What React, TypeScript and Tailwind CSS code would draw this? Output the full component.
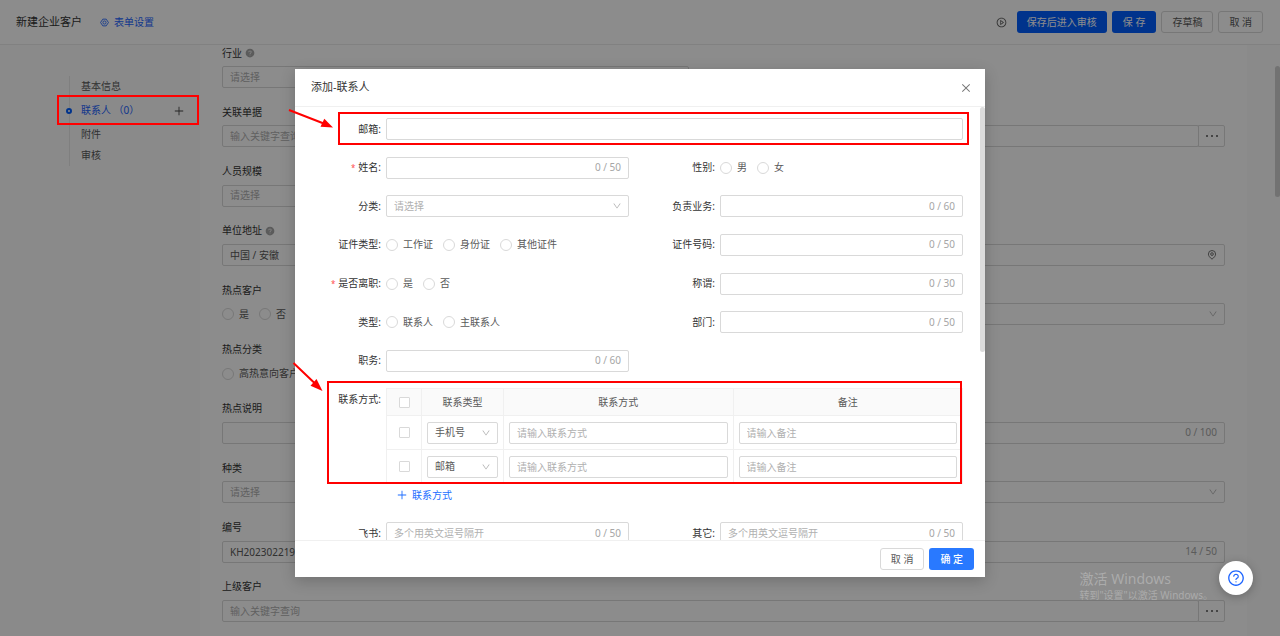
import { useState } from "react";
import type { ReactNode } from "react";
import {
  AiOutlineClose,
  AiOutlineDown,
  AiOutlinePlus,
  AiOutlinePlayCircle,
  AiOutlineQuestionCircle,
  AiFillQuestionCircle,
} from "react-icons/ai";

const navItems = [
  { label: "基本信息" },
  { label: "联系人 （0）", active: true },
  { label: "附件" },
  { label: "审核" },
];

const boxClass =
  "flex h-[22px] w-full min-w-0 items-center rounded-[2px] border border-[#d9d9d9] bg-white text-[10px] text-[#595959]";

function TextBox({ id, placeholder, value, count, label, suffix }: {
  id?: string;
  placeholder?: string;
  value?: string;
  count?: string;
  label?: string;
  suffix?: ReactNode;
}) {
  return (
    <div className={boxClass}>
      <input
        id={id}
        type="text"
        aria-label={label}
        placeholder={placeholder}
        defaultValue={value}
        className="h-full min-w-0 flex-1 bg-transparent px-[7px] outline-none placeholder:text-[#b0b0b0]"
      />
      {count && <span className="pr-[7px] text-[#a6a6a6]">{count}</span>}
      {suffix}
    </div>
  );
}

function SelectBox({ id, options, label, muted }: {
  id?: string;
  options: string[];
  label?: string;
  muted?: boolean;
}) {
  return (
    <div className={`${boxClass} relative`}>
      <select
        id={id}
        aria-label={label}
        className={`h-full w-full appearance-none bg-transparent px-[7px] outline-none ${muted ? "text-[#b0b0b0]" : ""}`}
      >
        {options.map((o) => (
          <option key={o}>{o}</option>
        ))}
      </select>
      <AiOutlineDown size={10} className="pointer-events-none absolute right-[6px] text-[#b0b0b0]" />
    </div>
  );
}

function Radios({ name, options }: { name: string; options: string[] }) {
  return (
    <div className="flex h-[22px] items-center gap-[10px] whitespace-nowrap text-[10px] text-[#595959]">
      {options.map((o) => (
        <label key={o} className="flex items-center gap-[5px]">
          <input
            type="radio"
            name={name}
            className="size-3 appearance-none rounded-full border border-[#d9d9d9] bg-white checked:border-4 checked:border-[#1677ff]"
          />
          {o}
        </label>
      ))}
    </div>
  );
}

// --- PAGE FORM ---
function PageField({ id, label, help, children }: {
  id?: string;
  label: string;
  help?: boolean;
  children: ReactNode;
}) {
  return (
    <div>
      <div className="mb-[5px] flex h-4 items-center gap-[3px] text-[10px] text-[#333]">
        <label htmlFor={id}>{label}</label>
        {help && <AiFillQuestionCircle size={10} className="text-[#a6a6a6]" />}
      </div>
      {children}
    </div>
  );
}

function LookupBox({ id }: { id: string }) {
  return (
    <div className="flex">
      <TextBox id={id} placeholder="输入关键字查询" />
      <button
        aria-label="选择"
        className="-ml-px flex h-[22px] w-[27px] shrink-0 items-center justify-center gap-[3px] rounded-r-[2px] border border-[#d9d9d9] bg-white"
      >
        <i className="size-[2px] rounded-full bg-[#555]" />
        <i className="size-[2px] rounded-full bg-[#555]" />
        <i className="size-[2px] rounded-full bg-[#555]" />
      </button>
    </div>
  );
}

function PinIcon() {
  return (
    <svg viewBox="0 0 12 12" className="mr-[7px] size-[10px] shrink-0" fill="none" stroke="#666" strokeWidth="1.1">
      <path d="M6 11C3.3 8.9 1.700 7.100 1.700 4.900a4.300 4.300 0 0 1 8.600 0C10.300 7.100 8.700 8.900 6 11Z" />
      <circle cx="6" cy="4.900" r="1.600" />
    </svg>
  );
}

function PageForm() {
  return (
    <div className="flex flex-1 flex-col justify-between bg-white px-[22px] pb-[14px]">
      <PageField id="industry" label="行业" help>
        <div className="w-[467px]">
          <SelectBox id="industry" options={["请选择"]} muted />
        </div>
      </PageField>
      <PageField id="related" label="关联单据">
        <LookupBox id="related" />
      </PageField>
      <PageField id="scale" label="人员规模">
        <div className="w-[467px]">
          <SelectBox id="scale" options={["请选择"]} muted />
        </div>
      </PageField>
      <PageField id="address" label="单位地址" help>
        <TextBox id="address" value="中国 / 安徽" suffix={<PinIcon />} />
      </PageField>
      <PageField label="热点客户">
        <div className="flex items-center">
          <div className="flex-1">
            <Radios name="hot" options={["是", "否"]} />
          </div>
          <div className="w-[467px]">
            <SelectBox label="热点客户选项" options={[""]} />
          </div>
        </div>
      </PageField>
      <PageField label="热点分类">
        <Radios name="hot-type" options={["高热意向客户"]} />
      </PageField>
      <PageField id="hot-note" label="热点说明">
        <TextBox id="hot-note" count="0 / 100" />
      </PageField>
      <PageField id="kind" label="种类">
        <SelectBox id="kind" options={["请选择"]} muted />
      </PageField>
      <PageField id="code" label="编号">
        <TextBox id="code" value="KH202302219001" count="14 / 50" />
      </PageField>
      <PageField id="parent" label="上级客户">
        <LookupBox id="parent" />
      </PageField>
    </div>
  );
}

function SettingIcon() {
  return (
    <svg viewBox="0 0 16 16" className="size-[9px]" fill="none" stroke="currentColor" strokeWidth="1.500">
      <path d="M5 2h6l4 6-4 6H5L1 8Z" strokeLinejoin="round" />
      <circle cx="8" cy="8" r="2.800" />
    </svg>
  );
}

function PageHeader() {
  return (
    <header className="flex h-[45px] shrink-0 items-center border-b border-[#ececec] bg-white pr-[17px] pl-4">
      <h1 className="text-[11px] text-[#333]">新建企业客户</h1>
      <a href="#settings" className="ml-[18px] flex items-center gap-[5px] text-[10px] text-[#1c64ff]">
        <SettingIcon />
        表单设置
      </a>
      <div className="ml-auto flex items-center gap-[5px] text-[10px]">
        <AiOutlinePlayCircle size={11} className="mr-[5px] text-[#555]" />
        <button className="h-[22px] rounded-[3px] bg-[#005eff] px-[10px] text-white">保存后进入审核</button>
        <button className="h-[22px] rounded-[3px] bg-[#005eff] px-[11px] text-white">保 存</button>
        <button className="h-[22px] rounded-[3px] border border-[#d9d9d9] px-[10px] text-[#595959]">存草稿</button>
        <button className="h-[22px] rounded-[3px] border border-[#d9d9d9] px-[10px] text-[#595959]">取 消</button>
      </div>
    </header>
  );
}

function SideNav() {
  return (
    <nav className="w-[200px] shrink-0 pt-[31px] pl-[69px]">
      <ul className="border-l border-[#e8e8e8] text-[10px] text-[#595959]">
        {navItems.map((item) => (
          <li
            key={item.label}
            className={`relative flex items-center pl-[11px] ${item.active ? "h-[27px] text-[#1c64ff]" : "h-[21px]"}`}
          >
            {item.active && (
              <i className="absolute -left-[4px] size-[6px] rounded-full border-2 border-[#005eff] bg-white" />
            )}
            <a href="#section">{item.label}</a>
            {item.active && (
              <button aria-label="添加" className="mr-[15px] ml-auto text-[#444]">
                <AiOutlinePlus size={12} />
              </button>
            )}
          </li>
        ))}
      </ul>
    </nav>
  );
}

// --- CONTACT DIALOG ---
function Row({ id, label, required, wide, children }: {
  id?: string;
  label: string;
  required?: boolean;
  wide?: boolean;
  children: ReactNode;
}) {
  return (
    <div className={`flex ${wide ? "w-full" : "w-1/2"}`}>
      <div className="flex h-[22px] w-[91px] shrink-0 items-center justify-end gap-[3px] pr-[5px] text-[10px] text-[#333]">
        {required && <span className="text-[8px] text-[#ff4d4f]">*</span>}
        <label htmlFor={id}>{label}:</label>
      </div>
      <div className="min-w-0 flex-1">{children}</div>
    </div>
  );
}

function ContactTable({ rows }: { rows: string[] }) {
  const check = "mx-auto block size-[11px] appearance-none rounded-[1px] border border-[#d9d9d9] bg-white";
  return (
    <table className="w-full table-fixed border-collapse text-[10px] text-[#595959]">
      <thead>
        <tr className="h-[27px] bg-[#fafafa]">
          <th className="w-[35px] border border-[#f0f0f0]">
            <input type="checkbox" aria-label="全选" className={check} />
          </th>
          <th className="w-[82px] border border-[#f0f0f0] font-normal">联系类型</th>
          <th className="border border-[#f0f0f0] font-normal">联系方式</th>
          <th className="border border-[#f0f0f0] font-normal">备注</th>
        </tr>
      </thead>
      <tbody>
        {rows.map((row, i) => (
          <tr key={i} className="h-[34px]">
            <td className="border border-[#f0f0f0]">
              <input type="checkbox" aria-label={row} className={check} />
            </td>
            <td className="border border-[#f0f0f0] px-[5px]">
              <SelectBox label="联系类型" options={[row]} />
            </td>
            <td className="border border-[#f0f0f0] px-[5px]">
              <TextBox label="联系方式" placeholder="请输入联系方式" />
            </td>
            <td className="border border-[#f0f0f0] px-[5px]">
              <TextBox label="备注" placeholder="请输入备注" />
            </td>
          </tr>
        ))}
      </tbody>
    </table>
  );
}

function ContactDialog() {
  const [rows, setRows] = useState(["手机号", "邮箱"]);

  return (
    <div
      role="dialog"
      aria-label="添加-联系人"
      className="relative flex h-[508px] w-[690px] flex-col bg-white shadow-[0_4px_14px_rgba(0,0,0,0.2)]"
    >
      <div className="flex h-[38px] shrink-0 items-center justify-between border-b border-[#f0f0f0] px-4">
        <h2 className="text-[11px] text-[#333]">添加-联系人</h2>
        <button aria-label="关闭" className="-mr-[3px] text-[#777]">
          <AiOutlineClose size={12} />
        </button>
      </div>

      <div className="relative min-h-0 flex-1 overflow-hidden pt-[11px] pr-[22px]">
        <div className="flex h-[254px] flex-col justify-between">
          <Row id="email" label="邮箱" wide>
            <TextBox id="email" />
          </Row>
          <div className="flex">
            <Row id="name" label="姓名" required>
              <TextBox id="name" count="0 / 50" />
            </Row>
            <Row label="性别">
              <Radios name="gender" options={["男", "女"]} />
            </Row>
          </div>
          <div className="flex">
            <Row id="category" label="分类">
              <SelectBox id="category" options={["请选择"]} muted />
            </Row>
            <Row id="business" label="负责业务">
              <TextBox id="business" count="0 / 60" />
            </Row>
          </div>
          <div className="flex">
            <Row label="证件类型">
              <Radios name="cert" options={["工作证", "身份证", "其他证件"]} />
            </Row>
            <Row id="cert-no" label="证件号码">
              <TextBox id="cert-no" count="0 / 50" />
            </Row>
          </div>
          <div className="flex">
            <Row label="是否离职" required>
              <Radios name="left" options={["是", "否"]} />
            </Row>
            <Row id="salutation" label="称谓">
              <TextBox id="salutation" count="0 / 30" />
            </Row>
          </div>
          <div className="flex">
            <Row label="类型">
              <Radios name="type" options={["联系人", "主联系人"]} />
            </Row>
            <Row id="dept" label="部门">
              <TextBox id="dept" count="0 / 50" />
            </Row>
          </div>
          <Row id="job" label="职务">
            <TextBox id="job" count="0 / 60" />
          </Row>
        </div>

        <div className="mt-4">
          <Row label="联系方式" wide>
            <ContactTable rows={rows} />
            <button
              onClick={() => setRows([...rows, "手机号"])}
              className="flex h-[22px] items-center gap-1 pl-[10px] text-[10px] text-[#1c6dff]"
            >
              <AiOutlinePlus size={12} />
              联系方式
            </button>
          </Row>
        </div>

        <div className="mt-4 flex">
          <Row id="feishu" label="飞书">
            <TextBox id="feishu" placeholder="多个用英文逗号隔开" count="0 / 50" />
          </Row>
          <Row id="other" label="其它">
            <TextBox id="other" placeholder="多个用英文逗号隔开" count="0 / 50" />
          </Row>
        </div>
        <div className="absolute top-0 right-0 h-[245px] w-[5px] rounded-[3px] bg-[#dcdcdc]" />
      </div>

      <div className="flex h-[37px] shrink-0 items-center justify-end gap-[5px] border-t border-[#f0f0f0] px-[11px] text-[10px]">
        <button className="h-[22px] rounded-[3px] border border-[#d9d9d9] px-[10px] text-[#595959]">取 消</button>
        <button className="h-[22px] rounded-[3px] bg-[#2979ff] px-[11px] font-medium text-white">确 定</button>
      </div>
    </div>
  );
}

// red frames and arrows that point at the new fields
function Annotations() {
  return (
    <svg className="pointer-events-none absolute inset-0 size-full" fill="none" stroke="#ff0000" strokeWidth="2">
      <rect x="58" y="96" width="140" height="28" />
      <rect x="339" y="113" width="629" height="31" />
      <rect x="328" y="382" width="633" height="101" />
      <path d="M289 110l36 14M293.500 363l21 20" />
      <g fill="#ff0000" stroke="none">
        <path d="M333 127.500l-12.500-.8 3.800-7.900Z" />
        <path d="M322.500 391l-12-5.200 6-6.800Z" />
      </g>
    </svg>
  );
}

export default function App() {
  return (
    <div className='relative h-screen overflow-hidden bg-[#fbfbfb] font-["Noto_Sans","Noto_Sans_CJK_SC",sans-serif] leading-normal'>
      <div className="flex h-full flex-col">
        <PageHeader />
        <main className="flex min-h-0 flex-1">
          <SideNav />
          <PageForm />
          <div className="w-[33px] shrink-0 pt-[21px]">
            <div className="ml-auto h-[131px] w-[5px] rounded-[3px] bg-[#d0d0d0]" />
          </div>
        </main>
      </div>

      <div className="absolute inset-0 flex items-start justify-center bg-black/45 pt-[69px]">
        <ContactDialog />
      </div>

      <div className="absolute right-[67px] bottom-[34px] text-[#ababab]">
        <p className="text-[14px] leading-[18px]">激活 Windows</p>
        <p className="text-[10px] leading-[14px]">转到"设置"以激活 Windows。</p>
      </div>

      <button
        aria-label="帮助"
        className="absolute right-[27px] bottom-[41px] flex size-[34px] items-center justify-center rounded-full bg-white text-[#1c64ff] shadow-[0_2px_10px_rgba(0,0,0,0.25)]"
      >
        <AiOutlineQuestionCircle size={18} />
      </button>

      <Annotations />
    </div>
  );
}
